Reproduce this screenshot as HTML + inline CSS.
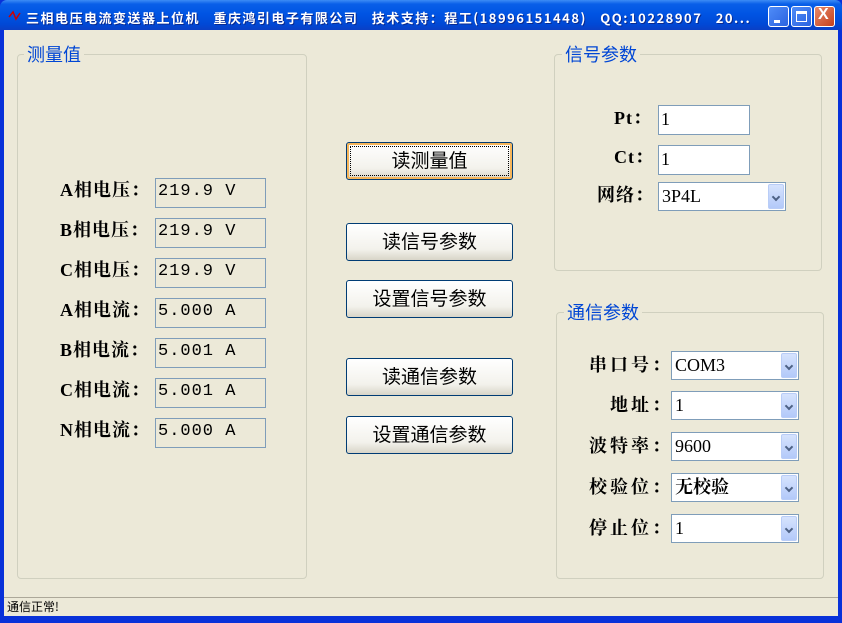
<!DOCTYPE html>
<html><head><meta charset="utf-8"><style>
*{margin:0;padding:0;box-sizing:border-box}
body{width:842px;height:623px;position:relative;background:#0831d9;overflow:hidden;font-family:"Liberation Serif","Noto Serif CJK SC",serif}
.win{position:absolute;left:4px;top:30px;width:834px;height:586px;background:#ece9d8}
.tb{position:absolute;left:0;top:0;width:842px;height:30px;background:linear-gradient(#3d8cf5 0,#0a5fe8 4px,#0054e3 14px,#0049d6 24px,#0a3fc4 30px);border-radius:7px 7px 0 0}
.tt{position:absolute;left:26px;top:8px;color:#fff;font:bold 13px "Noto Sans CJK SC",sans-serif;white-space:pre;letter-spacing:1.5px;text-shadow:1px 1px #0a2a90}
.wb{position:absolute;top:6px;width:21px;height:21px;border:1px solid #fff;border-radius:3px;background:linear-gradient(135deg,#4f8cf8,#2a63e0)}
.a{position:absolute}
.grp{position:absolute;border:1px solid #d0d0bf;border-radius:4px}
.lg{position:absolute;background:#ece9d8;color:#0046d5;font:18px "Noto Sans CJK SC",sans-serif;padding:0 3px;line-height:20px}
.lb{position:absolute;font-weight:bold;font-size:18px;color:#000;white-space:nowrap;line-height:20px;letter-spacing:1px}
.tx{position:absolute;border:1px solid #7f9db9;font:17px "Liberation Mono",monospace;letter-spacing:1px;padding:2px 2px;line-height:22px;white-space:nowrap}
.ro{background:#ece9d8;width:111px;height:30px}
.wh{background:#fff}
.cb{position:absolute;border:1px solid #7f9db9;background:#fff;font:18px "Liberation Serif","Noto Serif CJK SC",serif;padding:2px 3px;line-height:22px;height:29px;width:128px}
.cb i{position:absolute;right:1px;top:1px;width:16px;height:25px;background:linear-gradient(#d6e3fd,#b3c9f9);border:1px solid #b9cdf7;border-radius:2px}
.cb i:after{content:"";position:absolute;left:4px;top:9px;width:4px;height:4px;border-right:2px solid #4d6185;border-bottom:2px solid #4d6185;transform:rotate(45deg)}
.bt{position:absolute;left:346px;width:167px;height:38px;border:1px solid #003c74;border-radius:3px;background:linear-gradient(#fff,#f3f2ec 70%,#d8d5c8);font:19px "Noto Sans CJK SC",sans-serif;text-align:center;line-height:34px;color:#000}
</style></head><body>
<div class="tb"></div>
<svg class="a" style="left:7px;top:9px" width="16" height="14"><path d="M2 8 L6 3 L9 10 L13 4" stroke="#c00" stroke-width="1.5" fill="none"/></svg>
<div class="tt">三相电压电流变送器上位机   重庆鸿引电子有限公司   技术支持：程工(18996151448)   QQ:10228907   20...</div>
<div class="wb" style="left:768px"><div class="a" style="left:5px;top:13px;width:6px;height:3px;background:#fff"></div></div>
<div class="wb" style="left:791px"><div class="a" style="left:4px;top:4px;width:11px;height:11px;border:1px solid #fff;border-top-width:3px"></div></div>
<div class="wb" style="left:814px;background:linear-gradient(135deg,#e88a6a,#c4401c)"><div class="a" style="left:3px;top:-1px;color:#fff;font:bold 16px 'Liberation Sans',sans-serif">X</div></div>
<div class="win">
<div class="grp" style="left:13px;top:24px;width:290px;height:525px"></div>
<div class="lg" style="left:20px;top:14px">测量值</div>
<div class="grp" style="left:550px;top:24px;width:268px;height:217px"></div>
<div class="lg" style="left:558px;top:14px">信号参数</div>
<div class="grp" style="left:552px;top:282px;width:268px;height:267px"></div>
<div class="lg" style="left:560px;top:272px">通信参数</div>
<div class="a" style="left:0;top:567px;width:834px;height:19px;border-top:1px solid #aca899;background:#ece9d8;font:12px 'Noto Sans CJK SC',sans-serif;line-height:18px;padding-left:3px">通信正常!</div>
</div>
<div class="lb" style="left:60px;top:180px">A相电压：</div>
<div class="lb" style="left:60px;top:220px">B相电压：</div>
<div class="lb" style="left:60px;top:260px">C相电压：</div>
<div class="lb" style="left:60px;top:300px">A相电流：</div>
<div class="lb" style="left:60px;top:340px">B相电流：</div>
<div class="lb" style="left:60px;top:380px">C相电流：</div>
<div class="lb" style="left:60px;top:420px">N相电流：</div>
<div class="tx ro" style="left:155px;top:178px">219.9 V</div>
<div class="tx ro" style="left:155px;top:218px">219.9 V</div>
<div class="tx ro" style="left:155px;top:258px">219.9 V</div>
<div class="tx ro" style="left:155px;top:298px">5.000 A</div>
<div class="tx ro" style="left:155px;top:338px">5.001 A</div>
<div class="tx ro" style="left:155px;top:378px">5.001 A</div>
<div class="tx ro" style="left:155px;top:418px">5.000 A</div>
<div class="bt" style="top:142px;box-shadow:inset 0 0 0 2px #f5b55a"><div class="a" style="left:3px;top:3px;right:3px;bottom:3px;border:1px dotted #000"></div>读测量值</div>
<div class="bt" style="top:223px">读信号参数</div>
<div class="bt" style="top:280px">设置信号参数</div>
<div class="bt" style="top:358px">读通信参数</div>
<div class="bt" style="top:416px">设置通信参数</div>
<div class="lb" style="left:614px;top:108px">Pt：</div>
<div class="lb" style="left:614px;top:147px">Ct：</div>
<div class="lb" style="left:597px;top:185px">网络：</div>
<div class="tx wh" style="left:658px;top:105px;width:92px;height:30px;font-family:'Liberation Serif',serif;font-size:18px">1</div>
<div class="tx wh" style="left:658px;top:145px;width:92px;height:30px;font-family:'Liberation Serif',serif;font-size:18px">1</div>
<div class="cb" style="left:658px;top:182px">3P4L<i></i></div>
<div class="lb" style="left:589px;top:355px;letter-spacing:3px">串口号：</div>
<div class="lb" style="left:610px;top:395px;letter-spacing:3px">地址：</div>
<div class="lb" style="left:589px;top:436px;letter-spacing:3px">波特率：</div>
<div class="lb" style="left:589px;top:477px;letter-spacing:3px">校验位：</div>
<div class="lb" style="left:589px;top:518px;letter-spacing:3px">停止位：</div>
<div class="cb" style="left:671px;top:351px">COM3<i></i></div>
<div class="cb" style="left:671px;top:391px">1<i></i></div>
<div class="cb" style="left:671px;top:432px">9600<i></i></div>
<div class="cb" style="left:671px;top:473px;font-weight:bold">无校验<i></i></div>
<div class="cb" style="left:671px;top:514px">1<i></i></div>
</body></html>
